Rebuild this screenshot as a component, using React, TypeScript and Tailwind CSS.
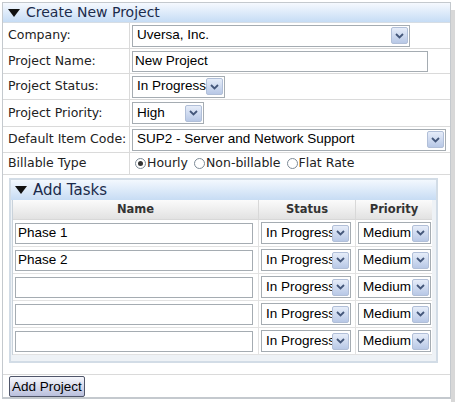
import React from 'react';

const labelFont = "font-['DejaVu_Sans',sans-serif] text-[12.5px] text-[#222]";
const fieldFont = "font-['Liberation_Sans',Arial,sans-serif] text-[13.5px] text-black";

function Triangle() {
  return (
    <svg width="12" height="8" viewBox="0 0 12 8" className="shrink-0">
      <path d="M0 0h12L6 8z" fill="#111" />
    </svg>
  );
}

function Arrow() {
  return (
    <span className="flex h-[17px] w-[17px] shrink-0 items-center justify-center rounded-[2px] border border-[#b1bfd8] bg-gradient-to-b from-[#e6edf9] to-[#b8c8e6]">
      <svg width="9" height="6" viewBox="0 0 9 6">
        <path d="M1 1l3.5 3.5L8 1" stroke="#44577a" strokeWidth="1.8" fill="none" />
      </svg>
    </span>
  );
}

function Select({ value, width }: { value: string; width: string }) {
  return (
    <div className={`flex h-[22px] items-center border border-[#a5acb2] bg-white pl-[4px] pr-[1px] ${width}`}>
      <span className={`flex-1 overflow-hidden whitespace-nowrap ${fieldFont}`}>{value}</span>
      <Arrow />
    </div>
  );
}

function Radio({ checked, label }: { checked?: boolean; label: string }) {
  return (
    <span className="flex items-center">
      <span className="flex h-[11px] w-[11px] items-center justify-center rounded-full border border-[#7d8a96] bg-white">
        {checked && <span className="h-[5px] w-[5px] rounded-full bg-[#333]" />}
      </span>
      <span className={`${labelFont} ml-[1px]`}>{label}</span>
    </span>
  );
}

function Row({ label, h, children }: { label: string; h: string; children: React.ReactNode }) {
  return (
    <div className={`flex border-b border-[#dadada] ${h}`}>
      <div className={`flex w-[127px] shrink-0 items-center border-r border-[#dadada] pl-[5px] ${labelFont}`}>{label}</div>
      <div className="flex flex-1 items-center pl-[2px]">{children}</div>
    </div>
  );
}

const tasks = ['Phase 1', 'Phase 2', '', '', ''];

export default function App() {
  return (
    <div className="flex h-[405px] w-[456px] bg-white pl-[2px] pt-[2px]">
      <div className="flex h-[397px] w-[449px] flex-col border border-[#c4c9ce] border-b-[2px]">
        <div className="flex h-[20px] items-center gap-[6px] border-b border-[#d6dde4] bg-gradient-to-b from-[#f5f9fe] to-[#c6dcf5] pl-[5px]">
          <Triangle />
          <span className="font-['DejaVu_Sans',sans-serif] text-[14px] text-[#1b2b4b]">Create New Project</span>
        </div>

        <Row label="Company:" h="h-[26px]">
          <Select value="Uversa, Inc." width="w-[278px]" />
        </Row>
        <Row label="Project Name:" h="h-[25px]">
          <div className={`flex h-[21px] w-[296px] items-center border border-[#a5acb2] bg-white pl-[2px] ${fieldFont}`}>New Project</div>
        </Row>
        <Row label="Project Status:" h="h-[26px]">
          <Select value="In Progress" width="w-[93px]" />
        </Row>
        <Row label="Project Priority:" h="h-[27px]">
          <Select value="High" width="w-[72px]" />
        </Row>
        <Row label="Default Item Code:" h="h-[26px]">
          <Select value="SUP2 - Server and Network Support" width="w-[314px]" />
        </Row>
        <Row label="Billable Type" h="h-[22px]">
          <div className="flex items-center gap-[6px] pl-[3px]">
            <Radio checked label="Hourly" />
            <Radio label="Non-billable" />
            <Radio label="Flat Rate" />
          </div>
        </Row>

        <div className="border-b border-[#dadada] pb-[11px] pl-[6px] pt-[3px]">
          <div className="w-[429px] border-[2px] border-[#d2dce6] bg-[#eef2f6] pb-[6px]">
            <div className="flex h-[20px] items-center gap-[6px] bg-gradient-to-b from-[#f3f8fe] to-[#c7dcf4] pl-[4px]">
              <Triangle />
              <span className="font-['DejaVu_Sans',sans-serif] text-[15px] text-[#1b2b4b]">Add Tasks</span>
            </div>
            <div className="ml-[1px] w-[420px] border-l border-[#c9d2da] bg-white">
              <div className="flex h-[20px] border-b border-[#d8d8d8] bg-gradient-to-b from-[#fbfbfb] to-[#e2e2e2] font-['DejaVu_Sans',sans-serif] text-[11.5px] font-bold text-[#333]">
                <div className="flex w-[246px] items-center justify-center border-r border-[#d8d8d8]">Name</div>
                <div className="flex w-[97px] items-center justify-center border-r border-[#d8d8d8]">Status</div>
                <div className="flex flex-1 items-center justify-center">Priority</div>
              </div>
              {tasks.map((t, i) => (
                <div key={i} className="flex h-[27px] border-b border-[#e2e2e2]">
                  <div className="flex w-[246px] items-center border-r border-[#e2e2e2] pl-[2px]">
                    <div className={`flex h-[21px] w-[238px] items-center border border-[#a5acb2] bg-white pl-[2px] ${fieldFont}`}>{t}</div>
                  </div>
                  <div className="flex w-[97px] items-center border-r border-[#e2e2e2] pl-[2px]">
                    <Select value="In Progress" width="w-[90px]" />
                  </div>
                  <div className="flex flex-1 items-center pl-[2px]">
                    <Select value="Medium" width="w-[73px]" />
                  </div>
                </div>
              ))}
            </div>
          </div>
        </div>

        <div className="flex flex-1 items-center pl-[6px]">
          <button className={`h-[21px] rounded-[2px] border border-[#50566a] bg-gradient-to-b from-[#f6f7fc] to-[#b9bfdc] px-[2px] ${fieldFont}`}>Add Project</button>
        </div>
      </div>
      <div className="mt-[8px] h-[392px] w-[4px] bg-[#d8d8d8]" />
    </div>
  );
}
